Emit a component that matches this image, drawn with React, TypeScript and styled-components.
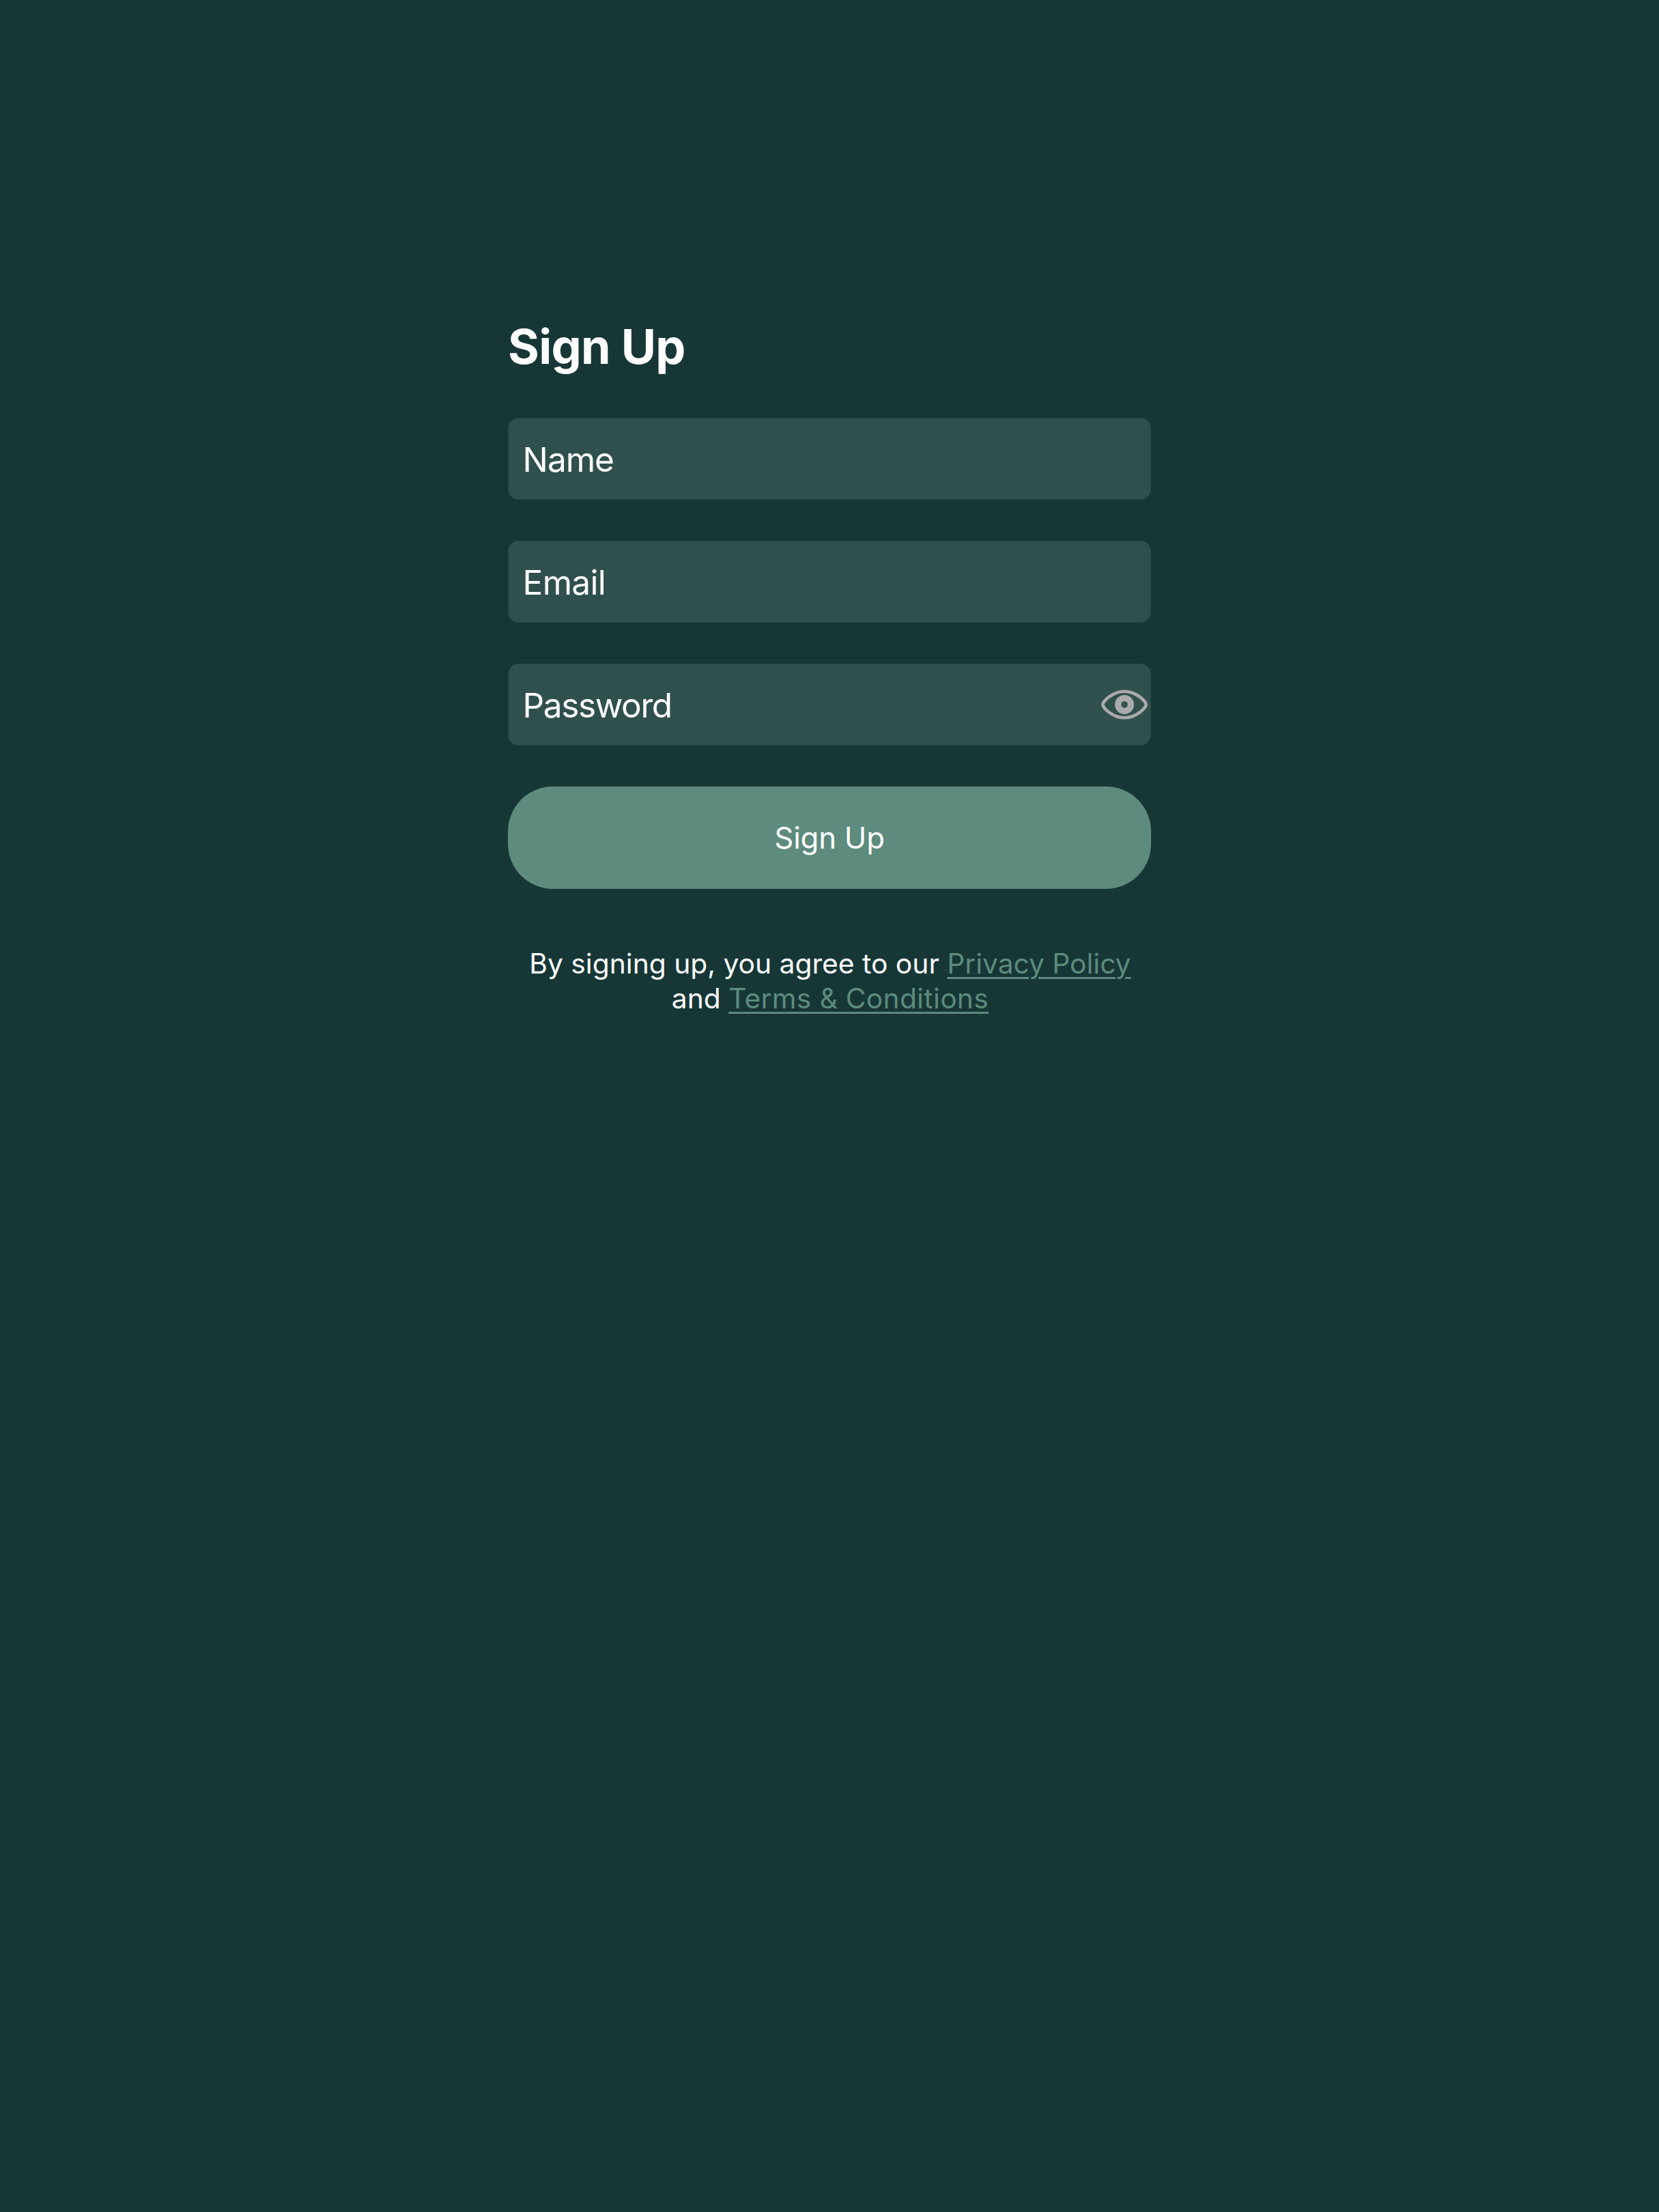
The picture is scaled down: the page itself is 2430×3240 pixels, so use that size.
import React from 'react';
import styled, { createGlobalStyle } from 'styled-components';

const GlobalStyle = createGlobalStyle`
  html, body {
    margin: 0;
    background: #173736;
  }
  * {
    box-sizing: border-box;
  }
`;

const Page = styled.main`
  display: flex;
  justify-content: center;
  align-items: flex-start;
  min-height: 3240px;
  padding-top: 465px;
  background: #173736;
  color: #fff;
  font-family: Inter, 'Liberation Sans', sans-serif;
  font-weight: 400;
`;

const Form = styled.form`
  display: flex;
  flex-direction: column;
  width: 942px;
`;

const Title = styled.h1`
  margin: 0 0 62px;
  font-size: 70px;
  font-weight: 700;
  line-height: 85px;
  letter-spacing: -0.68px;
`;

const Fields = styled.div`
  display: flex;
  flex-direction: column;
  gap: 60px;
`;

const Field = styled.label`
  display: flex;
  align-items: center;
  justify-content: space-between;
  height: 120px;
  padding: 0 4px 0 20.6px;
  border: 1px solid #294947;
  border-radius: 15px;
  background: #30504e;
`;

const Placeholder = styled.span<{ $tracking: number }>`
  padding-top: 2px;
  font-size: 49.5px;
  line-height: 60px;
  letter-spacing: ${(p) => p.$tracking}px;
`;

const EyeIcon = styled.svg`
  flex: none;
  width: 68px;
  height: 44px;
  margin-top: -1px;
`;

const SubmitButton = styled.button`
  height: 150px;
  margin: 60px 0 84px;
  padding: 1px 0 0;
  border: 0;
  border-radius: 66px;
  background: #5d8b7d;
  color: #fff;
  font: 400 43.6px/53px Inter, 'Liberation Sans', sans-serif;
  letter-spacing: -0.15px;
`;

const Legal = styled.p`
  margin: 0;
  padding: 0 28px 0 29.8px;
  font-size: 40.7px;
  line-height: 51px;
  letter-spacing: 0.03px;
  text-align: center;
`;

const LegalLink = styled.a<{ $tracking?: number }>`
  color: #5d8b7d;
  letter-spacing: ${(p) => p.$tracking ?? 0}px;
  text-decoration: underline;
  text-decoration-thickness: 3px;
  text-underline-offset: 5px;
  white-space: nowrap;
`;

function Eye() {
  return (
    <EyeIcon viewBox="-34 -22 68 44" fill="none" stroke="#aaa">
      <path
        d="M-31.7 0C-31.7-4.5-17.5-19.3 0-19.3S31.7-4.5 31.7 0 17.5 19.3 0 19.3-31.7 4.5-31.7 0Z"
        strokeWidth="4.6"
      />
      <circle r="9.4" strokeWidth="9.2" />
    </EyeIcon>
  );
}

const fields = [
  { label: 'Name', tracking: -1 },
  { label: 'Email', tracking: -0.7 },
  { label: 'Password', tracking: -1.36, secret: true },
];

export default function App() {
  return (
    <>
      <GlobalStyle />
      <Page>
        <Form>
          <Title>Sign Up</Title>
          <Fields>
            {fields.map((field) => (
              <Field key={field.label}>
                <Placeholder $tracking={field.tracking}>{field.label}</Placeholder>
                {field.secret && <Eye />}
              </Field>
            ))}
          </Fields>
          <SubmitButton type="button">Sign Up</SubmitButton>
          <Legal>
            By signing up, you agree to our <LegalLink>Privacy Policy</LegalLink>
            <br />
            and <LegalLink $tracking={0.33}>Terms &amp; Conditions</LegalLink>
          </Legal>
        </Form>
      </Page>
    </>
  );
}
